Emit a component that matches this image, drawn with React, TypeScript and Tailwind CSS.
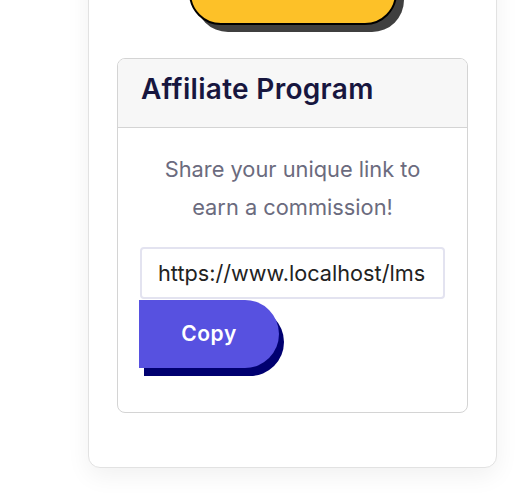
import React from "react";

export default function App() {
  return (
    <div className="h-[493px] w-[527px] overflow-hidden bg-white font-['Inter',sans-serif]">
      <div className="ml-[88px] -mt-[60px] w-[409px] rounded-[12px] border border-[#e2e2e2] bg-white pb-[54px] pt-[20px] shadow-[0_8px_24px_rgba(0,0,0,0.06)]">
        <div className="flex justify-center">
          <div className="h-[64px] w-[208px] rounded-[32px] border-2 border-black bg-[#fdc128] shadow-[7px_7px_0_#3f3f3f]" />
        </div>

        <div className="mx-[28px] mt-[33px] overflow-hidden rounded-[8px] border border-[#d4d4d4]">
          <div className="flex h-[69px] items-center border-b border-[#d4d4d4] bg-[#f7f7f7] px-[23px] pb-[9px]">
            <h2 className="text-[28px] font-semibold tracking-[0.3px] text-[#17163f]">Affiliate Program</h2>
          </div>

          <div className="px-[22px] pb-[44px] pt-[22px]">
            <p className="text-center text-[21.8px] leading-[38px] text-[#6b6b7e]">
              Share your unique link to
              <br />
              earn a commission!
            </p>

            <input
              readOnly
              value="https://www.localhost/lms"
              className="mt-[21px] block h-[52px] w-full rounded-[4px] border-2 border-[#e3e3f0] bg-white px-[16px] text-[21.7px] text-[#222222] outline-none"
            />

            <button className="-ml-px mt-px h-[68px] w-[140px] rounded-r-[34px] bg-[#5751e0] text-[21px] font-semibold tracking-[0.6px] text-white shadow-[5px_8px_0_#000070]">
              Copy
            </button>
          </div>
        </div>
      </div>
    </div>
  );
}
